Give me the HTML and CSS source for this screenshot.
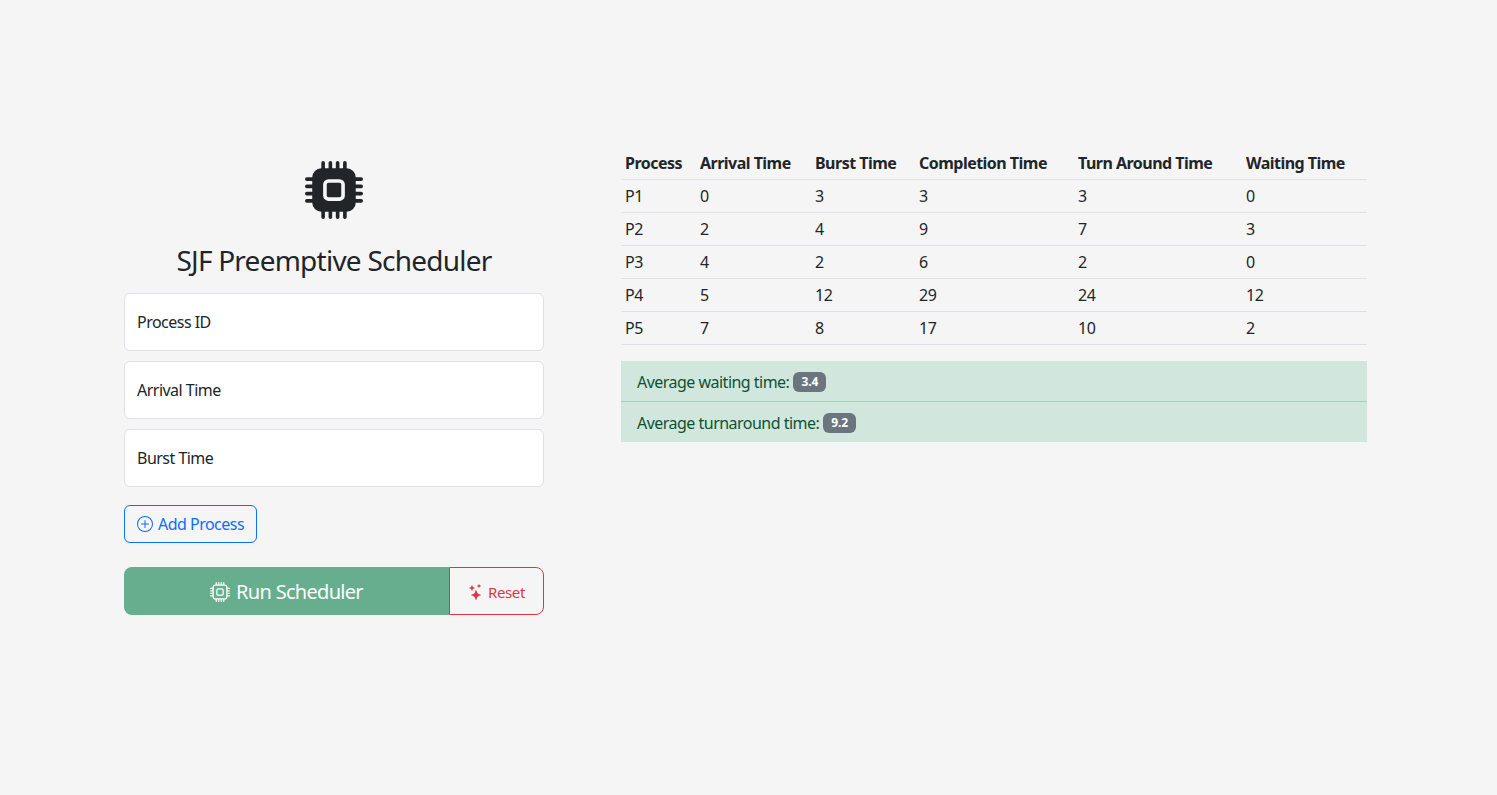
FILE: index.html
```html
<!DOCTYPE html>
<html lang="en">
<head>
<meta charset="utf-8">
<title>SJF Preemptive Scheduler</title>
<link rel="stylesheet" href="styles.css">
</head>
<body>
<main class="page">
  <section class="form-col">
    <div class="logo">
      <svg class="logo-icon" viewBox="0 0 16 16" fill="currentColor"><path d="M6.5 6a.5.5 0 0 0-.5.5v3a.5.5 0 0 0 .5.5h3a.5.5 0 0 0 .5-.5v-3a.5.5 0 0 0-.5-.5h-3z"/><path d="M5.5.5a.5.5 0 0 0-1 0V2A2.5 2.5 0 0 0 2 4.5H.5a.5.5 0 0 0 0 1H2v1H.5a.5.5 0 0 0 0 1H2v1H.5a.5.5 0 0 0 0 1H2v1H.5a.5.5 0 0 0 0 1H2A2.5 2.5 0 0 0 4.5 14v1.5a.5.5 0 0 0 1 0V14h1v1.5a.5.5 0 0 0 1 0V14h1v1.5a.5.5 0 0 0 1 0V14h1v1.5a.5.5 0 0 0 1 0V14a2.5 2.5 0 0 0 2.5-2.5h1.5a.5.5 0 0 0 0-1H14v-1h1.5a.5.5 0 0 0 0-1H14v-1h1.5a.5.5 0 0 0 0-1H14v-1h1.5a.5.5 0 0 0 0-1H14A2.5 2.5 0 0 0 11.5 2V.5a.5.5 0 0 0-1 0V2h-1V.5a.5.5 0 0 0-1 0V2h-1V.5a.5.5 0 0 0-1 0V2h-1V.5zm1 4.5h3A1.5 1.5 0 0 1 11 6.5v3A1.5 1.5 0 0 1 9.5 11h-3A1.5 1.5 0 0 1 5 9.5v-3A1.5 1.5 0 0 1 6.5 5z"/></svg>
    </div>
    <h1 class="title">SJF Preemptive Scheduler</h1>
    <div class="fields">
      <input class="field" type="text" placeholder="Process ID">
      <input class="field" type="text" placeholder="Arrival Time">
      <input class="field" type="text" placeholder="Burst Time">
    </div>
    <button class="btn-add" type="button">
      <svg class="icon-16" viewBox="0 0 16 16" fill="currentColor"><path d="M8 15A7 7 0 1 1 8 1a7 7 0 0 1 0 14zm0 1A8 8 0 1 0 8 0a8 8 0 0 0 0 16z"/><path d="M8 4a.5.5 0 0 1 .5.5v3h3a.5.5 0 0 1 0 1h-3v3a.5.5 0 0 1-1 0v-3h-3a.5.5 0 0 1 0-1h3v-3A.5.5 0 0 1 8 4z"/></svg>
      <span>Add Process</span>
    </button>
    <div class="btn-group">
      <button class="btn-run" type="button">
        <svg class="icon-20" viewBox="0 0 16 16" fill="currentColor"><path d="M5 0a.5.5 0 0 1 .5.5V2h1V.5a.5.5 0 0 1 1 0V2h1V.5a.5.5 0 0 1 1 0V2h1V.5a.5.5 0 0 1 1 0V2A2.5 2.5 0 0 1 14 4.5h1.5a.5.5 0 0 1 0 1H14v1h1.5a.5.5 0 0 1 0 1H14v1h1.5a.5.5 0 0 1 0 1H14v1h1.5a.5.5 0 0 1 0 1H14a2.5 2.5 0 0 1-2.5 2.5v1.5a.5.5 0 0 1-1 0V14h-1v1.5a.5.5 0 0 1-1 0V14h-1v1.5a.5.5 0 0 1-1 0V14h-1v1.5a.5.5 0 0 1-1 0V14A2.5 2.5 0 0 1 2 11.5H.5a.5.5 0 0 1 0-1H2v-1H.5a.5.5 0 0 1 0-1H2v-1H.5a.5.5 0 0 1 0-1H2v-1H.5a.5.5 0 0 1 0-1H2A2.5 2.5 0 0 1 4.5 2V.5A.5.5 0 0 1 5 0zm-.5 3A1.5 1.5 0 0 0 3 4.5v7A1.5 1.5 0 0 0 4.5 13h7a1.5 1.5 0 0 0 1.5-1.5v-7A1.5 1.5 0 0 0 11.5 3h-7zM5 6.5A1.5 1.5 0 0 1 6.5 5h3A1.5 1.5 0 0 1 11 6.5v3A1.5 1.5 0 0 1 9.5 11h-3A1.5 1.5 0 0 1 5 9.5v-3zM6.5 6a.5.5 0 0 0-.5.5v3a.5.5 0 0 0 .5.5h3a.5.5 0 0 0 .5-.5v-3a.5.5 0 0 0-.5-.5h-3z"/></svg>
        <span>Run Scheduler</span>
      </button>
      <button class="btn-reset" type="button">
        <svg class="icon-16" viewBox="0 0 16 16" fill="currentColor"><path d="M7.657 6.247c.11-.33.576-.33.686 0l.645 1.937a2.89 2.89 0 0 0 1.829 1.828l1.936.645c.33.11.33.576 0 .686l-1.937.645a2.89 2.89 0 0 0-1.828 1.829l-.645 1.936a.361.361 0 0 1-.686 0l-.645-1.937a2.89 2.89 0 0 0-1.828-1.828l-1.937-.645a.361.361 0 0 1 0-.686l1.937-.645a2.89 2.89 0 0 0 1.828-1.828l.645-1.937zM3.794 1.148a.217.217 0 0 1 .412 0l.387 1.162c.173.518.579.924 1.097 1.097l1.162.387a.217.217 0 0 1 0 .412l-1.162.387A1.734 1.734 0 0 0 4.593 5.69l-.387 1.162a.217.217 0 0 1-.412 0L3.407 5.69A1.734 1.734 0 0 0 2.31 4.593l-1.162-.387a.217.217 0 0 1 0-.412l1.162-.387A1.734 1.734 0 0 0 3.407 2.31l.387-1.162zM10.863.099a.145.145 0 0 1 .274 0l.258.774c.115.346.386.617.732.732l.774.258a.145.145 0 0 1 0 .274l-.774.258a1.156 1.156 0 0 0-.732.732l-.258.774a.145.145 0 0 1-.274 0l-.258-.774a1.156 1.156 0 0 0-.732-.732L9.1 2.137a.145.145 0 0 1 0-.274l.774-.258c.346-.115.617-.386.732-.732L10.863.1z"/></svg>
        <span>Reset</span>
      </button>
    </div>
  </section>
  <section class="result-col">
    <table class="table">
      <colgroup>
        <col class="c1"><col class="c2"><col class="c3"><col class="c4"><col class="c5"><col class="c6">
      </colgroup>
      <thead>
        <tr><th>Process</th><th>Arrival Time</th><th>Burst Time</th><th>Completion Time</th><th>Turn Around Time</th><th>Waiting Time</th></tr>
      </thead>
      <tbody>
        <tr><td>P1</td><td>0</td><td>3</td><td>3</td><td>3</td><td>0</td></tr>
        <tr><td>P2</td><td>2</td><td>4</td><td>9</td><td>7</td><td>3</td></tr>
        <tr><td>P3</td><td>4</td><td>2</td><td>6</td><td>2</td><td>0</td></tr>
        <tr><td>P4</td><td>5</td><td>12</td><td>29</td><td>24</td><td>12</td></tr>
        <tr><td>P5</td><td>7</td><td>8</td><td>17</td><td>10</td><td>2</td></tr>
      </tbody>
    </table>
    <ul class="averages">
      <li class="avg-item">Average waiting time: <span class="badge">3.4</span></li>
      <li class="avg-item">Average turnaround time: <span class="badge">9.2</span></li>
    </ul>
  </section>
</main>
</body>
</html>
```
FILE: styles.css
```css
* { box-sizing: border-box; }
html, body { margin: 0; height: 100%; }
body {
  background: #f5f5f5;
  color: #212529;
  font-family: "Noto Sans", "Open Sans", sans-serif;
  font-size: 16px;
  line-height: 24px;
  letter-spacing: -0.52px;
}
.page {
  display: flex;
  align-items: flex-start;
  gap: 77px;
  padding: 147px 130px 0 124px;
}
.form-col {
  flex: 0 0 420px;
  padding-top: 14px;
}
.logo { display: flex; justify-content: center; }
.logo-icon { width: 58px; height: 58px; display: block; }
.title {
  margin: 23px 0 15px;
  font-size: 28px;
  line-height: 36px;
  font-weight: 400;
  letter-spacing: -0.76px;
  text-align: center;
}
.fields { display: flex; flex-direction: column; gap: 10px; }
.field {
  display: block;
  width: 100%;
  height: 58px;
  padding: 0 12px;
  background: #fff;
  border: 1px solid #dee2e6;
  border-radius: 6px;
  font: inherit;
  letter-spacing: inherit;
  color: #212529;
  outline: none;
}
.field::placeholder { color: #212529; opacity: 1; }
.btn-add {
  display: inline-flex;
  align-items: center;
  gap: 5px;
  height: 38px;
  margin-top: 18px;
  padding: 0 12px;
  background: transparent;
  border: 1px solid #0d6efd;
  border-radius: 6px;
  color: #0d6efd;
  font: inherit;
  letter-spacing: inherit;
}
.icon-16 { width: 16px; height: 16px; display: block; flex: none; }
.icon-20 { width: 20px; height: 20px; display: block; flex: none; }
.btn-group { display: flex; height: 48px; margin-top: 24px; }
.btn-run {
  flex: 0 0 325px;
  display: flex;
  align-items: center;
  justify-content: center;
  gap: 6px;
  padding: 1px 0 0;
  background: rgba(25, 135, 84, 0.65);
  border: 0;
  border-radius: 8px 0 0 8px;
  color: #fff;
  font: inherit;
  font-size: 20px;
  letter-spacing: -0.7px;
}
.btn-reset {
  flex: 1;
  display: flex;
  align-items: center;
  justify-content: center;
  gap: 4px;
  padding: 1px 0 0;
  background: transparent;
  border: 1px solid #dc3545;
  border-radius: 0 8px 8px 0;
  color: #dc3545;
  font: inherit;
  font-size: 15px;
  letter-spacing: -0.4px;
}
.result-col { flex: 0 0 746px; }
.table { width: 746px; table-layout: fixed; border-collapse: collapse; }
.c1 { width: 75px; }
.c2 { width: 115px; }
.c3 { width: 104px; }
.c4 { width: 159px; }
.c5 { width: 168px; }
.c6 { width: 125px; }
.table th, .table td {
  padding: 4px;
  height: 33px;
  text-align: left;
  border-bottom: 1px solid #dee2e6;
  white-space: nowrap;
}
.table th { font-weight: 700; height: 32px; padding: 3px 4px; }
.averages { list-style: none; margin: 16px 0 0; padding: 0; }
.avg-item {
  display: flex;
  align-items: center;
  gap: 4px;
  height: 40px;
  padding: 2px 16px 0;
  background: #d1e7dd;
  color: #0f5132;
}
.avg-item + .avg-item { border-top: 1px solid #a3cfbb; height: 41px; }
.badge {
  display: inline-block;
  padding: 4px 8px;
  background: #6c757d;
  border-radius: 6px;
  color: #fff;
  font-size: 12px;
  font-weight: 700;
  line-height: 12px;
  letter-spacing: -0.1px;
}
```
